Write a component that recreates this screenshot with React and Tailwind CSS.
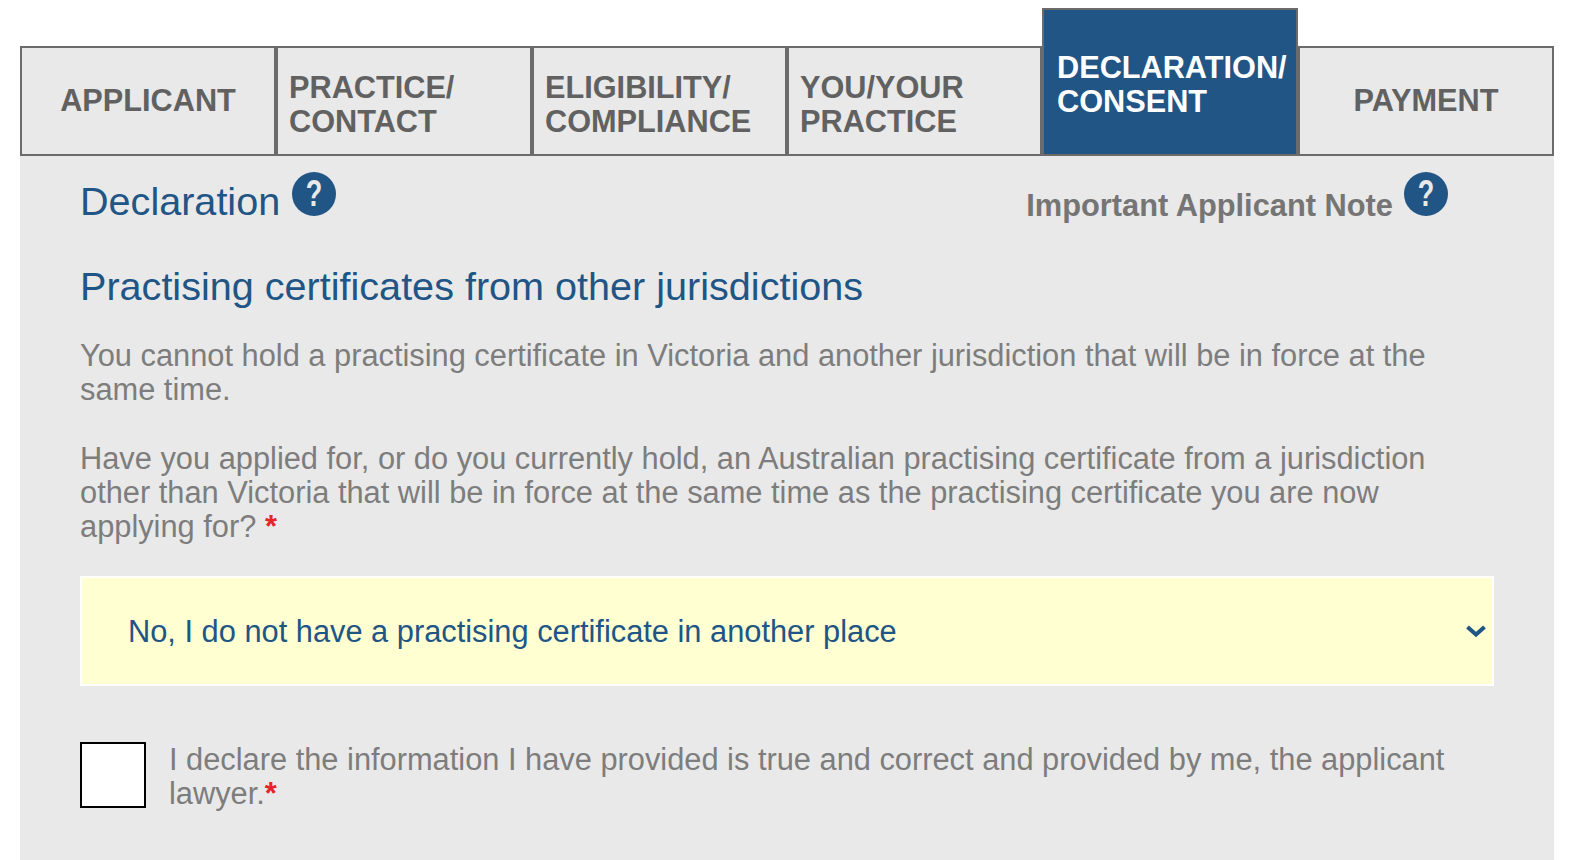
const tabs = [
  { lines: ["APPLICANT"], center: true, width: "w-[256px]" },
  { lines: ["PRACTICE/", "CONTACT"], width: "w-[256px]" },
  { lines: ["ELIGIBILITY/", "COMPLIANCE"], width: "w-[255px]" },
  { lines: ["YOU/YOUR", "PRACTICE"], width: "w-[255px]" },
  { lines: ["DECLARATION/", "CONSENT"], active: true },
  { lines: ["PAYMENT"], center: true, width: "w-[256px]" },
];

function HelpIcon() {
  return (
    <span className="flex h-[44px] w-[44px] shrink-0 items-center justify-center rounded-full bg-[#205585] text-[36px] leading-none font-bold text-[#e9e9e9]">
      <span className="scale-x-75">?</span>
    </span>
  );
}

function Tab({ tab }) {
  if (tab.active) {
    return (
      <div className="flex h-[148px] w-[256px] flex-col border-2 border-[#6b6b6b] bg-[#205585] pt-[41px] pl-[13px] text-[30.7px] leading-[34px] font-bold text-white">
        {tab.lines.map((line) => (
          <span key={line}>{line}</span>
        ))}
      </div>
    );
  }
  return (
    <div
      className={
        tab.center
          ? `flex h-[110px] ${tab.width} flex-col items-center justify-center border-2 border-[#6b6b6b] bg-[#e9e9e9] pb-[1px] text-[30.7px] leading-[34px] font-bold text-[#616161]`
          : `flex h-[110px] ${tab.width} flex-col justify-center border-2 border-[#6b6b6b] bg-[#e9e9e9] pt-[8px] pl-[11px] text-[30.7px] leading-[34px] font-bold text-[#616161]`
      }
    >
      {tab.lines.map((line) => (
        <span key={line}>{line}</span>
      ))}
    </div>
  );
}

export default function App() {
  return (
    <div className="h-[860px] overflow-hidden bg-white pt-[8px] font-['Liberation_Sans',Arial,sans-serif]">
      <div className="ml-[20px] flex w-[1534px] items-end">
        {tabs.map((tab) => (
          <Tab key={tab.lines[0]} tab={tab} />
        ))}
      </div>

      <div className="ml-[20px] h-[704px] w-[1534px] bg-[#e9e9e9] px-[60px] pt-[16px]">
        <div className="flex items-start justify-between pr-[46px]">
          <div className="flex items-start gap-[12px]">
            <h1 className="pt-[7px] text-[39.6px] leading-[45px] font-normal text-[#205585]">Declaration</h1>
            <HelpIcon />
          </div>
          <div className="flex items-start gap-[11px]">
            <span className="pt-[15px] text-[30.8px] leading-[37px] font-bold text-[#757575]">Important Applicant Note</span>
            <HelpIcon />
          </div>
        </div>

        <h2 className="mt-[40px] text-[39.6px] leading-[44px] font-normal text-[#205585]">
          Practising certificates from other jurisdictions
        </h2>

        <p className="mt-[31px] w-[1350px] text-[30.8px] leading-[34px] text-[#7d7d7d]">
          You cannot hold a practising certificate in Victoria and another jurisdiction that will be in force at the same time.
        </p>

        <p className="mt-[35px] w-[1350px] text-[30.8px] leading-[34px] text-[#7d7d7d]">
          Have you applied for, or do you currently hold, an Australian practising certificate from a jurisdiction other than Victoria that will be in force at the same time as the practising certificate you are now applying for? <span className="font-bold text-[#e4262a]">*</span>
        </p>

        <div className="mt-[32px] flex h-[110px] w-[1414px] items-center justify-between border-2 border-white bg-[#ffffd2] pr-[5px] pl-[46px] text-[30.8px] text-[#205585]">
          <span className="pt-[2px]">No, I do not have a practising certificate in another place</span>
          <svg width="22" height="14" viewBox="0 0 22 14" fill="none" stroke="#205585" strokeWidth="4">
            <path d="M2.5 3 L11 10.5 L19.500 3" />
          </svg>
        </div>

        <div className="mt-[56px] flex items-start gap-[23px]">
          <div className="h-[66px] w-[66px] shrink-0 border-2 border-black bg-white" />
          <p className="pt-[1px] text-[30.8px] leading-[34px] text-[#7d7d7d]">
            I declare the information I have provided is true and correct and provided by me, the applicant lawyer.<span className="font-bold text-[#e4262a]">*</span>
          </p>
        </div>
      </div>
    </div>
  );
}
